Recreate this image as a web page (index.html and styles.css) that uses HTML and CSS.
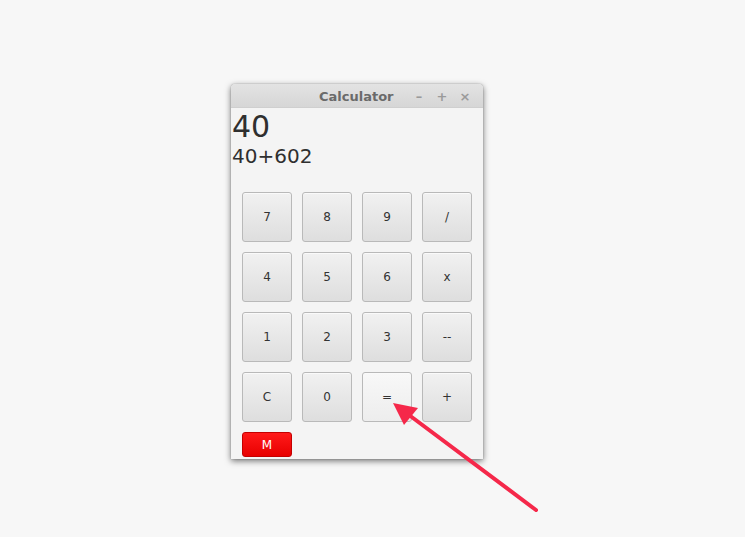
FILE: index.html
```html
<!DOCTYPE html>
<html>
<head>
<meta charset="utf-8">
<link rel="stylesheet" href="styles.css">
</head>
<body>
<div class="window">
  <div class="titlebar">
    <span class="title">Calculator</span>
    <span class="controls"><span class="ctl">&#8211;</span><span class="ctl">+</span><span class="ctl">&#215;</span></span>
  </div>
  <div class="content">
    <div class="result">40</div>
    <div class="expr">40+602</div>
    <div class="keys">
      <button class="key">7</button><button class="key">8</button><button class="key">9</button><button class="key">/</button>
      <button class="key">4</button><button class="key">5</button><button class="key">6</button><button class="key">x</button>
      <button class="key">1</button><button class="key">2</button><button class="key">3</button><button class="key">--</button>
      <button class="key">C</button><button class="key">0</button><button class="key hover">=</button><button class="key">+</button>
    </div>
    <button class="mem">M</button>
  </div>
</div>
<svg class="arrow" width="745" height="537" viewBox="0 0 745 537">
  <line x1="536" y1="510" x2="405" y2="412" stroke="#f5284a" stroke-width="4" stroke-linecap="round"/>
  <polygon points="393,403 418,408 404,425" fill="#f5284a"/>
</svg>
</body>
</html>
```
FILE: styles.css
```css
html, body {
  margin: 0;
  padding: 0;
  background: #f7f7f7;
  width: 745px;
  height: 537px;
  overflow: hidden;
  font-family: "DejaVu Sans", sans-serif;
}
.window {
  position: absolute;
  left: 231px;
  top: 84px;
  width: 252px;
  height: 375px;
  background: #f4f4f4;
  border-radius: 4px 4px 0 0;
  box-shadow: 0 2px 6px rgba(0,0,0,0.55), 0 0 1px rgba(0,0,0,0.5);
  display: flex;
  flex-direction: column;
}
.titlebar {
  height: 24px;
  flex: none;
  border-radius: 4px 4px 0 0;
  background: linear-gradient(#e3e3e3, #d6d6d6);
  border-bottom: 1px solid #cfcfcf;
  box-sizing: border-box;
  position: relative;
}
.title {
  position: absolute;
  left: 88px;
  top: 5px;
  font-weight: bold;
  font-size: 13px;
  line-height: 16px;
  color: #6a6a6a;
}
.controls {
  position: absolute;
  left: 181px;
  top: 4px;
  display: flex;
  gap: 9px;
  color: #9a9a9a;
  font-weight: bold;
  font-size: 13px;
  line-height: 18px;
}
.ctl { width: 14px; text-align: center; }
.content {
  padding: 0 0 0 1px;
}
.result {
  font-size: 30px;
  color: #2f2f2f;
  line-height: 34px;
  margin-top: 2px;
}
.expr {
  font-size: 20px;
  color: #2f2f2f;
  line-height: 24px;
}
.keys {
  display: grid;
  grid-template-columns: repeat(4, 50px);
  grid-auto-rows: 50px;
  gap: 10px;
  margin: 24px 0 0 10px;
}
.key {
  font-family: "DejaVu Sans", sans-serif;
  font-size: 12px;
  color: #333;
  background: linear-gradient(#f1f1f1, #dedede);
  border: 1px solid #b9b9b9;
  border-radius: 3px;
  padding: 0;
  box-shadow: inset 0 1px 0 #fafafa;
}
.key.hover {
  background: linear-gradient(#f8f8f8, #ededed);
}
.mem {
  margin: 10px 0 0 10px;
  width: 50px;
  height: 25px;
  padding: 0;
  background: linear-gradient(#ff1a1a, #e80000);
  border: 1px solid #c40000;
  border-radius: 3px;
  color: #ffffff;
  font-family: "DejaVu Sans", sans-serif;
  font-size: 12px;
}
.arrow {
  position: absolute;
  left: 0;
  top: 0;
  pointer-events: none;
}
```
